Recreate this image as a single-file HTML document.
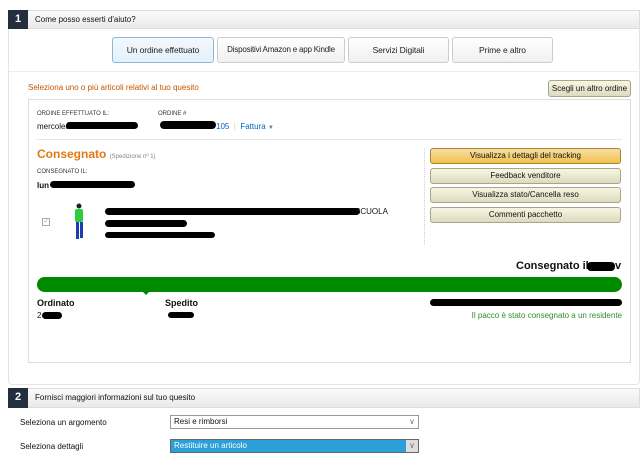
<!DOCTYPE html>
<html><head><meta charset="utf-8"><style>
*{margin:0;padding:0;box-sizing:border-box}
body{width:640px;height:465px;background:#fff;font-family:"Liberation Sans",sans-serif;font-size:8px;color:#111;position:relative;overflow:hidden}
.a{position:absolute;white-space:nowrap}
.hdr{position:absolute;left:8px;right:0;height:19px;background:linear-gradient(#fafafa,#eaeaea);border:1px solid #ddd;font-size:8px;line-height:17px;padding-left:26px}
.num{position:absolute;left:-1px;top:-1px;width:20px;height:19px;background:#232f3e;color:#fff;font-weight:bold;font-size:11px;text-align:center;line-height:19px}
.tab{position:absolute;top:37px;height:26px;border:1px solid #ccc;border-radius:3px;background:linear-gradient(#fff,#f0f0f0);text-align:center;line-height:24px;font-size:8.5px;color:#222;white-space:nowrap;overflow:hidden;letter-spacing:-0.1px}
.btn{position:absolute;left:430px;width:191px;height:16px;border:1px solid #a9a58a;border-radius:3px;background:linear-gradient(#f8f6e2,#dedac0);text-align:center;line-height:14px;font-size:8px;white-space:nowrap}
.blk{position:absolute;background:#000;border-radius:4px}
.sel{position:absolute;left:170px;width:249px;height:14px;border:1px solid #999;font-size:8px;line-height:12px;padding-left:3px;background:#fff}
.sel i{position:absolute;right:3px;top:0;font-style:normal;color:#777}
</style></head><body>
<div class="a" style="left:8px;top:28px;width:632px;height:357px;border:1px solid #e4e4e4;border-top:none;border-radius:0 0 4px 4px"></div>
<div class="hdr" style="top:10px"><div class="num">1</div>Come posso esserti d'aiuto?</div>
<div class="tab" style="left:112px;width:102px;background:linear-gradient(#f2f8fd,#e4f1fb);border-color:#8fb8d8">Un ordine effettuato</div>
<div class="tab" style="left:217px;width:128px;font-size:8px;letter-spacing:-0.2px">Dispositivi Amazon e app Kindle</div>
<div class="tab" style="left:348px;width:101px">Servizi Digitali</div>
<div class="tab" style="left:452px;width:101px">Prime e altro</div>
<div class="a" style="left:9px;top:71px;width:631px;border-top:1px solid #eee"></div>
<div class="a" style="left:28px;top:83px;color:#c45500;font-size:8px">Seleziona uno o più articoli relativi al tuo quesito</div>
<div class="btn" style="left:548px;top:80px;width:83px;height:17px;line-height:15px">Scegli un altro ordine</div>
<div class="a" style="left:28px;top:99px;width:603px;height:264px;border:1px solid #ddd"></div>
<div class="a" style="left:37px;top:111px;font-size:6px;color:#333">ORDINE EFFETTUATO IL:</div>
<div class="a" style="left:158px;top:111px;font-size:6px;color:#333">ORDINE #</div>
<div class="a" style="left:37px;top:122px;font-size:8px">mercoled</div>
<div class="blk" style="left:66px;top:122px;width:72px;height:7px"></div>
<div class="blk" style="left:160px;top:121px;width:56px;height:8px"></div>
<div class="a" style="left:216px;top:122px;font-size:8px;color:#0066c0">105 <span style="color:#ccc">&nbsp;|&nbsp;</span> Fattura <span style="color:#777;font-size:6px">▼</span></div>
<div class="a" style="left:37px;top:139px;width:585px;border-top:1px solid #e7e7e7"></div>
<div class="a" style="left:37px;top:147px;font-size:12px;font-weight:bold;color:#e47911">Consegnato <span style="font-size:6px;font-weight:normal;color:#888">(Spedizione nº 1)</span></div>
<div class="a" style="left:37px;top:169px;font-size:6px;color:#333">CONSEGNATO IL:</div>
<div class="a" style="left:37px;top:181px;font-size:8px;font-weight:bold">lun</div>
<div class="blk" style="left:50px;top:181px;width:85px;height:7px"></div>
<div class="a" style="left:42px;top:218px;width:8px;height:8px;border:1px solid #aaa;color:#999;font-size:6px;line-height:6px;text-align:center">✓</div>
<svg class="a" style="left:72px;top:203px" width="14" height="38"><circle cx="7" cy="3" r="2.5" fill="#222"/><rect x="3" y="6" width="8" height="13" rx="2" fill="#2ecc40"/><rect x="4" y="19" width="3" height="17" fill="#1b3fb0"/><rect x="8" y="19" width="3" height="16" fill="#1b3fb0"/></svg>
<div class="blk" style="left:105px;top:208px;width:255px;height:7px"></div>
<div class="a" style="left:355px;top:207px;font-size:8px">SCUOLA</div>
<div class="blk" style="left:105px;top:220px;width:82px;height:7px"></div>
<div class="blk" style="left:105px;top:232px;width:110px;height:6px"></div>
<div class="a" style="left:424px;top:148px;height:97px;border-left:1px dotted #ccc"></div>
<div class="btn" style="top:148px;background:linear-gradient(#f7dfa5,#f0c14b);border-color:#a88734">Visualizza i dettagli del tracking</div>
<div class="btn" style="top:168px">Feedback venditore</div>
<div class="btn" style="top:187px">Visualizza stato/Cancella reso</div>
<div class="btn" style="top:207px">Commenti pacchetto</div>
<div class="a" style="left:516px;top:260px;font-size:11px;font-weight:bold">Consegnato il</div>
<div class="blk" style="left:587px;top:262px;width:28px;height:9px"></div>
<div class="a" style="left:615px;top:260px;font-size:11px;font-weight:bold">v</div>
<div class="a" style="left:37px;top:277px;width:585px;height:15px;background:#008a00;border-radius:8px"></div>
<div class="a" style="left:142px;top:291px;width:0;height:0;border:4px solid transparent;border-top-color:#008a00"></div>
<div class="a" style="left:37px;top:298px;font-size:9px;font-weight:bold">Ordinato</div>
<div class="a" style="left:165px;top:298px;font-size:9px;font-weight:bold">Spedito</div>
<div class="a" style="left:37px;top:311px;font-size:8px">2</div>
<div class="blk" style="left:42px;top:312px;width:20px;height:7px"></div>
<div class="blk" style="left:168px;top:312px;width:26px;height:6px"></div>
<div class="blk" style="left:430px;top:299px;width:192px;height:7px"></div>
<div class="a" style="right:18px;top:311px;font-size:8px;color:#2d8c2d">Il pacco è stato consegnato a un residente</div>
<div class="hdr" style="top:388px;height:20px"><div class="num" style="height:20px">2</div>Fornisci maggiori informazioni sul tuo quesito</div>
<div class="a" style="left:20px;top:418px;font-size:8px">Seleziona un argomento</div>
<div class="sel" style="top:415px">Resi e rimborsi<i>∨</i></div>
<div class="a" style="left:20px;top:442px;font-size:8px">Seleziona dettagli</div>
<div class="sel" style="top:439px;background:#2a9fd8;color:#fff;border-color:#666">Restituire un articolo<i style="background:#ddd;width:12px;right:0;text-align:center;height:12px">∨</i></div>
</body></html>
